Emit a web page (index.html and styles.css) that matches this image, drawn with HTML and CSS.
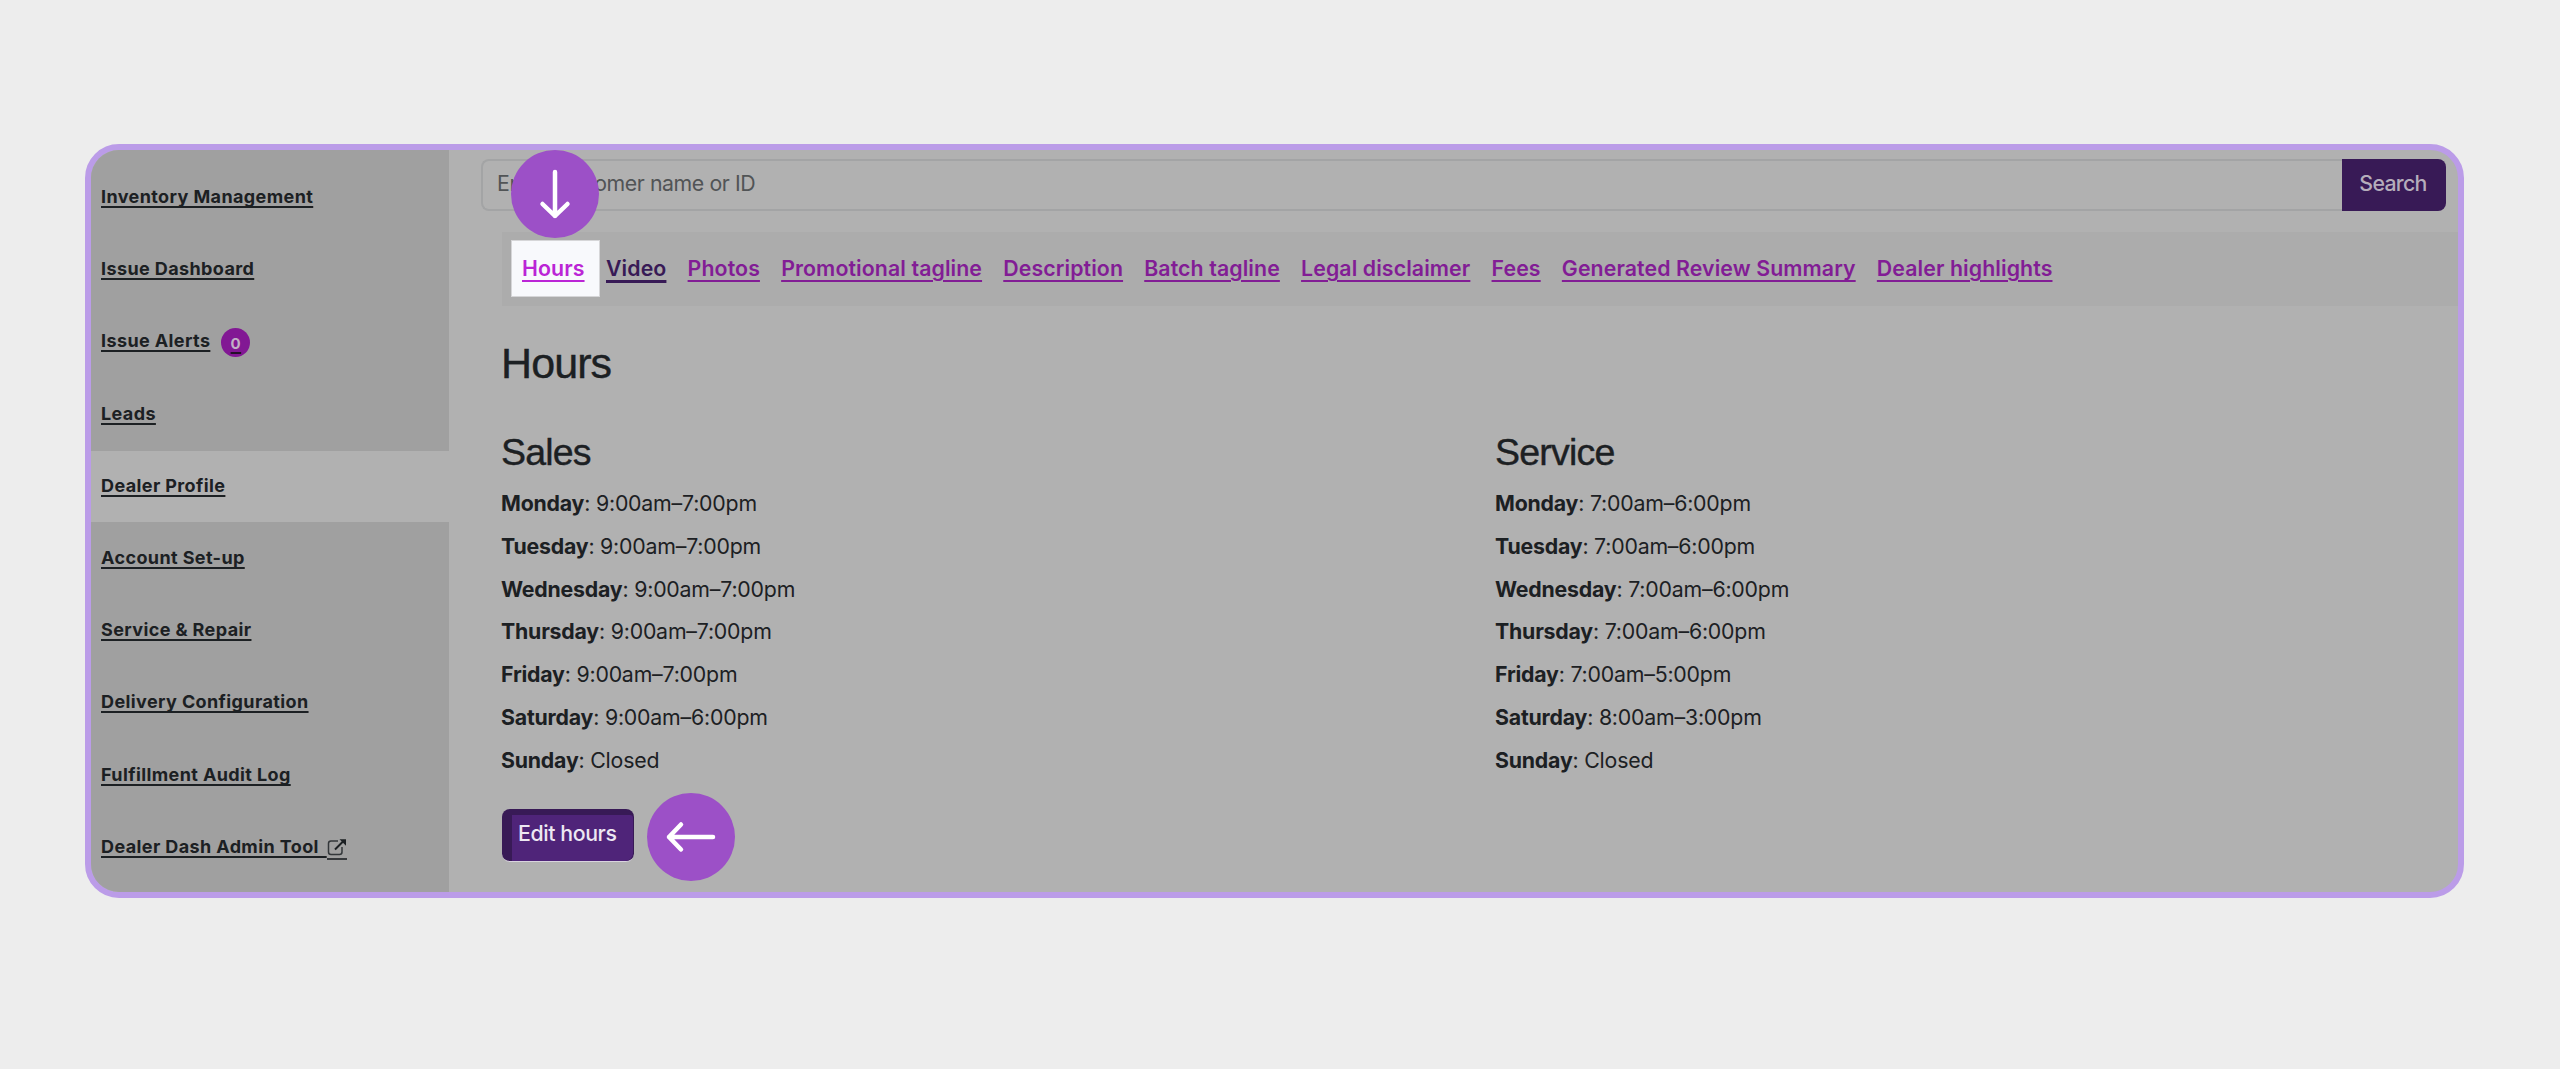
FILE: index.html
```html
<!DOCTYPE html>
<html lang="en">
<head>
    <meta charset="utf-8">
    <title>Dealer Profile</title>
    <link rel="stylesheet" href="styles.css">
</head>

<body>

    <div class="frame">

        <nav class="sidebar">
            <a href="#">Inventory Management</a>
            <a href="#">Issue Dashboard</a>
            <a href="#">Issue Alerts<span class="badge">0</span></a>
            <a href="#">Leads</a>
            <a href="#" class="active">Dealer Profile</a>
            <a href="#">Account Set-up</a>
            <a href="#">Service &amp; Repair</a>
            <a href="#">Delivery Configuration</a>
            <a href="#">Fulfillment Audit Log</a>
            <a href="#">Dealer Dash Admin Tool&nbsp;&#8201;<svg class="external" viewBox="0 0 20 22" width="20" height="22"><path d="M11 3H4Q1.500 3 1.500 5.500V14Q1.500 16.500 4 16.500H12.500Q15 16.500 15 14V9" fill="none" stroke="#33373a" stroke-width="1.500"/><path d="M8 11.500L17 2.500" stroke="#1c2023" stroke-width="2"/><path d="M12.500 1.200H19V7.700Z" fill="#1c2023"/><path d="M0 21H20" stroke="#1c2023" stroke-width="1.600"/></svg></a>
        </nav>

        <main class="content">

            <div class="search">
                <div class="search-input">Enter customer name or ID</div>
                <div class="search-button">Search</div>
                <div class="pointer pointer-down">
                    <svg viewBox="0 0 88 88" width="88" height="88"><path d="M44 22V66M31.500 54L44 66L56.500 54"/></svg>
                </div>
            </div>

            <div class="tabs">
                <a href="#" class="current">Hours</a>
                <a href="#" class="hover">Video</a>
                <a href="#">Photos</a>
                <a href="#">Promotional tagline</a>
                <a href="#">Description</a>
                <a href="#">Batch tagline</a>
                <a href="#">Legal disclaimer</a>
                <a href="#">Fees</a>
                <a href="#">Generated Review Summary</a>
                <a href="#">Dealer highlights</a>
            </div>

            <h1>Hours</h1>

            <div class="columns">
                <section>
                    <h2>Sales</h2>
                    <p><b>Monday</b>: 9:00am–7:00pm</p>
                    <p><b>Tuesday</b>: 9:00am–7:00pm</p>
                    <p><b>Wednesday</b>: 9:00am–7:00pm</p>
                    <p><b>Thursday</b>: 9:00am–7:00pm</p>
                    <p><b>Friday</b>: 9:00am–7:00pm</p>
                    <p><b>Saturday</b>: 9:00am–6:00pm</p>
                    <p><b>Sunday</b>: Closed</p>
                </section>
                <section>
                    <h2>Service</h2>
                    <p><b>Monday</b>: 7:00am–6:00pm</p>
                    <p><b>Tuesday</b>: 7:00am–6:00pm</p>
                    <p><b>Wednesday</b>: 7:00am–6:00pm</p>
                    <p><b>Thursday</b>: 7:00am–6:00pm</p>
                    <p><b>Friday</b>: 7:00am–5:00pm</p>
                    <p><b>Saturday</b>: 8:00am–3:00pm</p>
                    <p><b>Sunday</b>: Closed</p>
                </section>
            </div>

            <div class="actions">
                <div class="edit"><span>Edit hours</span></div>
                <div class="pointer">
                    <svg viewBox="0 0 88 88" width="88" height="88"><path d="M66 44H22M34 31.500L22 44L34 56.500"/></svg>
                </div>
            </div>

        </main>

    </div>

</body>

</html>
```
FILE: styles.css
```css
* {
    box-sizing: border-box;
}
body {
    margin: 0;
    padding: 144px 96px 0 85px;
    background-color: #ededed;
    font-family: Inter, "Liberation Sans", sans-serif;
    font-size: 21.3px;
    color: #1c2023;
}
.frame {
    display: flex;
    height: 754px;
    border: 6px solid #bb9ce8;
    border-radius: 34px;
    background-color: #b1b1b1;
    overflow: hidden;
}

/* sidebar */
.sidebar {
    flex: none;
    width: 358px;
    padding-top: 12px;
    background-color: #a0a0a0;
    font-size: 18px;
    font-weight: 700;
    letter-spacing: 0.390px;
}
.sidebar a {
    display: block;
    height: 72.2px;
    padding-left: 10px;
    line-height: 69px;
    color: #1c2023;
    white-space: nowrap;
    text-decoration: underline;
    text-decoration-thickness: 2px;
    text-underline-offset: 3px;
    text-decoration-skip-ink: none;
}
.sidebar .active {
    height: 71.4px;
    margin-bottom: 0.8px;
    background-color: #b1b1b1;
}
.badge {
    display: inline-block;
    width: 29px;
    height: 29px;
    margin-left: 11px;
    border-radius: 50%;
    background-color: #821894;
    color: #c2b0c6;
    font-size: 15px;
    line-height: 31px;
    text-align: center;
    text-decoration: underline #241029 2px;
    vertical-align: -2px;
}
.external {
    vertical-align: -7px;
}

/* main area */
.content {
    flex: 1;
    min-width: 0;
}
.search {
    position: relative;
    display: flex;
    height: 52px;
    margin: 9px 12px 0 32px;
}
.search-input {
    flex: 1;
    padding-left: 14px;
    border: 2px solid #a3a4a5;
    border-right: 0;
    border-radius: 8px 0 0 8px;
    line-height: 45px;
    letter-spacing: -0.420px;
    color: #515456;
}
.search-button {
    width: 104px;
    padding-right: 2px;
    border-radius: 0 8px 8px 0;
    background-color: #381a56;
    color: #b5adbb;
    font-weight: 500;
    line-height: 48px;
    letter-spacing: -0.700px;
    text-align: center;
}
.pointer {
    width: 88px;
    height: 88px;
    border-radius: 50%;
    background-color: #9c50c7;
}
.pointer svg {
    display: block;
    fill: none;
    stroke: #fff;
    stroke-width: 4.5;
    stroke-linecap: round;
    stroke-linejoin: round;
}
.pointer-down {
    position: absolute;
    left: 30px;
    top: -9px;
}
.tabs {
    display: flex;
    height: 74px;
    margin: 21px 0 0 53px;
    padding: 8px 9px;
    background-color: #acacac;
    font-weight: 600;
    letter-spacing: 0.100px;
}
.tabs a {
    margin-right: 21.2px;
    line-height: 56px;
    color: #821d95;
    white-space: nowrap;
    text-decoration-thickness: 2px;
    text-underline-offset: 4px;
}
.tabs .current {
    width: 89px;
    height: 57px;
    margin-right: 6px;
    padding-left: 10px;
    background-color: #f8f9fc;
    border: 1px solid #d6d6d8;
    line-height: 54px;
    color: #bb25d6;
}
.tabs .hover {
    color: #381a56;
    text-decoration-thickness: 3px;
}
h1, h2 {
    margin: 0;
    font-family: "Liberation Sans", Arial, sans-serif;
    font-weight: 400;
    -webkit-text-stroke: 0.4px #1c2023;
}
h1 {
    padding-left: 52px;
    margin-top: 31px;
    font-size: 43px;
    line-height: 52px;
    letter-spacing: -0.900px;
}
.columns {
    display: flex;
    margin: 37px 0 0 52px;
}
.columns section {
    flex: none;
    width: 994px;
}
h2 {
    font-size: 37.500px;
    line-height: 53px;
    letter-spacing: -0.800px;
}
p {
    margin: 0;
    line-height: 42.750px;
    letter-spacing: -0.200px;
}
.columns p:first-of-type {
    margin-top: 3px;
}

.actions {
    display: flex;
    margin: 12px 0 0 53px;
}
.edit {
    width: 132px;
    height: 53px;
    margin: 16px 13px 0 0;
    padding: 6px 1px 1px 10px;
    border-radius: 8px;
    background-color: #381a56;
    border-bottom: 1px solid #d9d4de;
}
.edit span {
    display: block;
    height: 46px;
    padding-left: 6px;
    background-color: #4f2479;
    border-radius: 0 3px 8px 0;
    font-weight: 500;
    line-height: 37px;
    letter-spacing: -0.400px;
    color: #ede8f2;
}
```
